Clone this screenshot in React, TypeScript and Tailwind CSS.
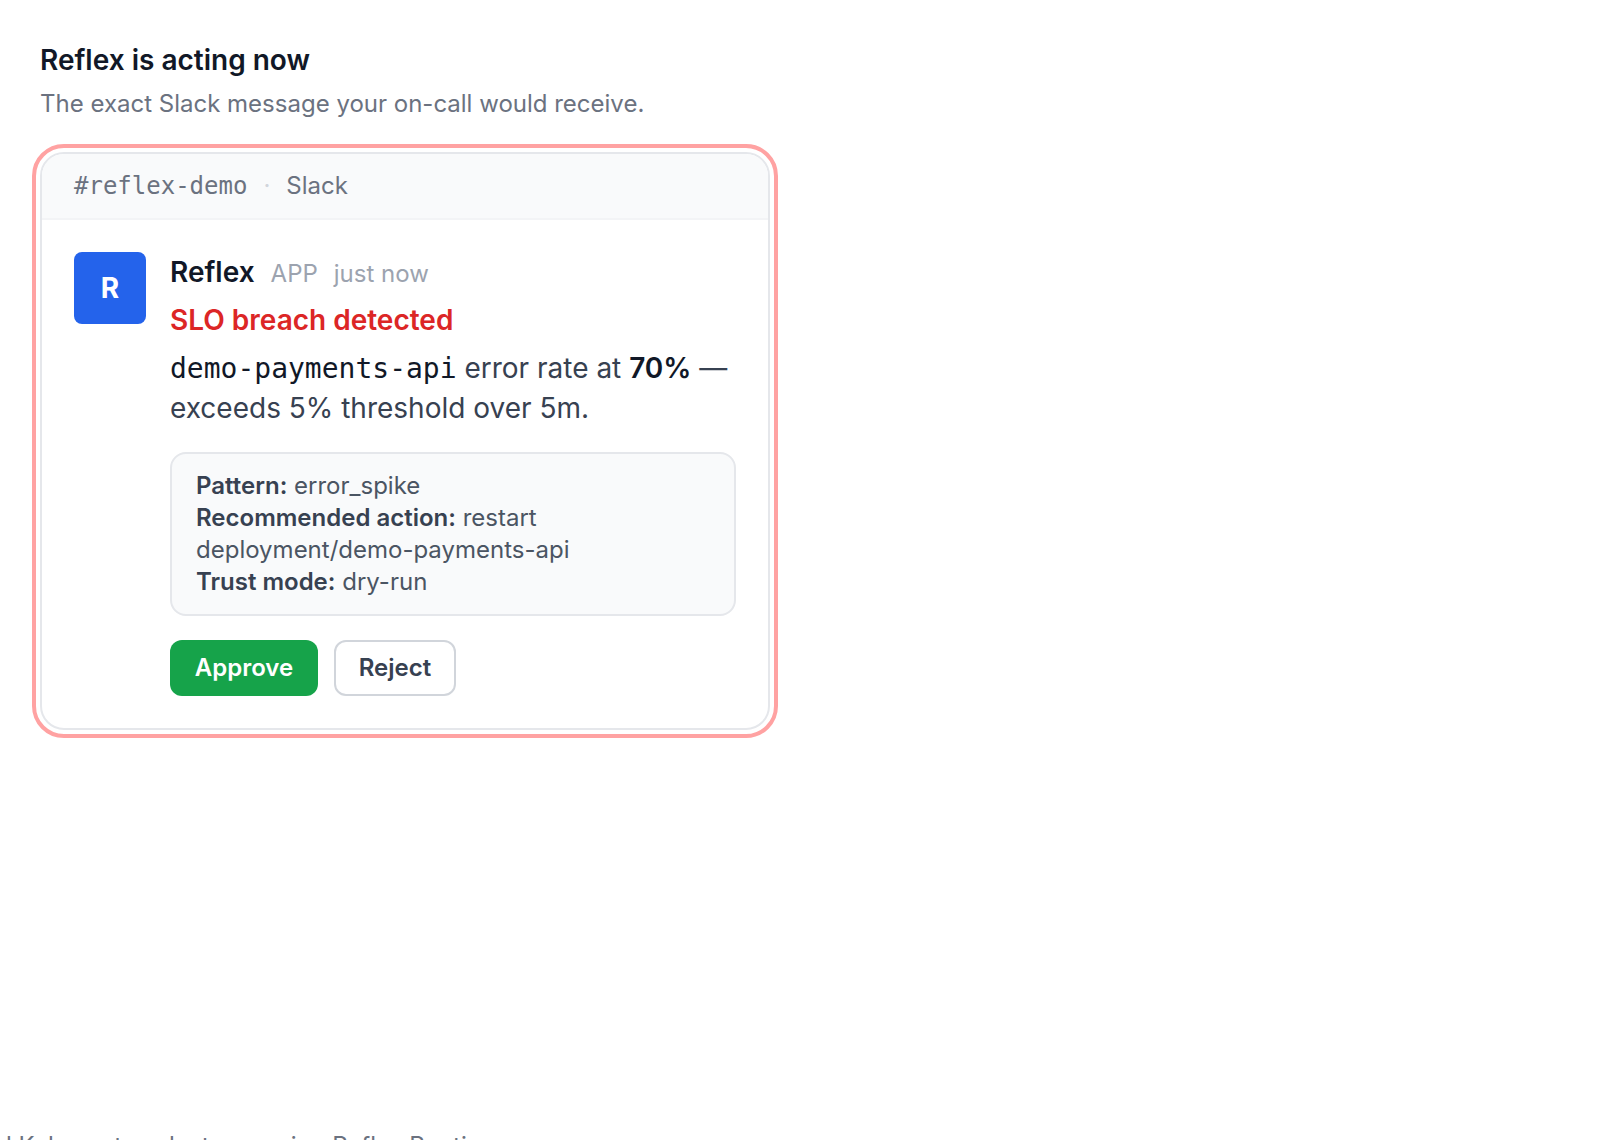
import type { ReactNode } from "react";

function Detail({ label, children }: { label: string; children: ReactNode }) {
  return (
    <div>
      <dt className="inline font-semibold text-[#374151]">{label}:</dt>{" "}
      <dd className="inline">{children}</dd>
    </div>
  );
}

function SlackMessage() {
  return (
    <article className="overflow-hidden rounded-3xl border-2 border-[#e5e7eb] bg-white outline-4 outline-offset-4 outline-[#ffa2a2]">
      <header className="flex items-center gap-4 border-b-2 border-[#f3f4f6] bg-[#f9fafb] px-8 py-4 text-2xl/8 text-[#6b7280]">
        <span className="font-['DejaVu_Sans_Mono',monospace]">#reflex-demo</span>
        <span className="text-[#d1d5db]">·</span>
        <span>Slack</span>
      </header>
      <div className="flex gap-6 p-8">
        <div className="flex size-18 shrink-0 items-center justify-center rounded-lg bg-[#2463eb] text-[28px]/10 font-bold text-white">
          R
        </div>
        <div className="min-w-0 flex-1">
          <div className="flex items-baseline gap-4">
            <span className="text-[28px]/10 font-semibold text-[#111827]">Reflex</span>
            <span className="text-2xl/8 text-[#9ca3af]">APP</span>
            <span className="text-2xl/8 text-[#9ca3af]">just now</span>
          </div>
          <h2 className="mt-2 text-[28px]/10 font-semibold text-[#dc2626]">SLO breach detected</h2>
          <p className="mt-2 text-[28px]/10 text-[#374151]">
            <code className="font-['DejaVu_Sans_Mono',monospace] leading-none text-[#111827]">demo-payments-api</code> error rate at{" "}
            <strong className="font-semibold text-[#111827]">70%</strong> — exceeds 5% threshold over 5m.
          </p>
          <dl className="mt-6 rounded-2xl border-2 border-[#e5e7eb] bg-[#f9fafb] px-6 py-4 text-2xl/8 text-[#4b5563]">
            <Detail label="Pattern">error_spike</Detail>
            <Detail label="Recommended action">
              restart <br />
              deployment/demo-payments-api
            </Detail>
            <Detail label="Trust mode">dry-run</Detail>
          </dl>
          <div className="mt-6 flex gap-4">
            <button type="button" className="h-14 min-w-37 rounded-xl bg-[#16a34a] px-5 text-2xl/8 font-semibold text-white">
              Approve
            </button>
            <button type="button" className="h-14 min-w-[122px] rounded-xl border-2 border-[#d1d5db] bg-white px-5 text-2xl/8 font-semibold text-[#374151]">
              Reject
            </button>
          </div>
        </div>
      </div>
    </article>
  );
}

export default function App() {
  return (
    <div className="flex h-screen flex-col overflow-hidden bg-white font-['Inter',sans-serif]">
      <main className="grid flex-1 grid-cols-2 gap-15 p-10">
        <section>
          <h1 className="text-[28px]/10 font-semibold text-[#111827]">Reflex is acting now</h1>
          <p className="mt-2 mb-8 text-2xl/8 text-[#6b7280]">The exact Slack message your on-call would receive.</p>
          <SlackMessage />
        </section>
      </main>
      <footer className="h-2.5 shrink-0 px-1.5 text-2xl/8 whitespace-nowrap text-[#6b7280]">
        l Kubernetes cluster running Reflex Runtime
      </footer>
    </div>
  );
}
